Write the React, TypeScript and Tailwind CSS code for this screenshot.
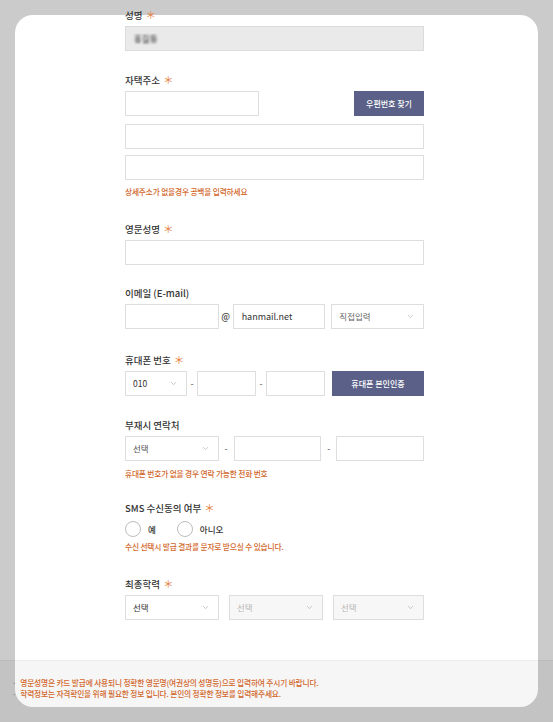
import { ChevronDown } from 'lucide-react';

function Star() {
  return <span className="ml-[3px] text-[10.5px] font-normal leading-[14px] text-[#e5803f]">＊</span>;
}

function Label({ text, req = true }: { text: string; req?: boolean }) {
  return (
    <div className="flex h-[14px] items-center text-[9.5px] font-medium leading-[14px] text-[#333]">
      {text}
      {req && <Star />}
    </div>
  );
}

function Field({ className = '', children }: { className?: string; children?: React.ReactNode }) {
  return (
    <div className={`flex h-[25px] items-center border border-[#dedede] bg-white px-[8px] text-[9px] text-[#333] ${className}`}>
      {children}
    </div>
  );
}

function Select({ text, className = '', muted = false }: { text: string; className?: string; muted?: boolean }) {
  return (
    <div
      className={`flex h-[25px] items-center justify-between border border-[#dedede] pl-[7px] pr-[8px] text-[8.5px] ${
        muted ? 'bg-[#f7f7f7] text-[#b8b8b8]' : 'bg-white text-[#444]'
      } ${className}`}
    >
      <span>{text}</span>
      <ChevronDown size={9} strokeWidth={1.4} className="text-[#9a9a9a]" />
    </div>
  );
}

function Help({ text, className = '' }: { text: string; className?: string }) {
  return <p className={`text-[7.7px] font-medium leading-[11px] tracking-[-0.02em] text-[#d2662a] ${className}`}>{text}</p>;
}

function Dash() {
  return <span className="flex w-[10px] justify-center text-[9px] text-[#555]">-</span>;
}

function Radio({ text }: { text: string }) {
  return (
    <div className="flex items-center gap-[7px]">
      <span className="h-[16px] w-[16px] rounded-full border border-[#bdbdbd] bg-white" />
      <span className="text-[8.5px] font-medium text-[#333]">{text}</span>
    </div>
  );
}

export default function App() {
  return (
    <div className="relative h-[722px] w-[553px] overflow-hidden bg-[#cbcbcb] px-[15px] pt-[15px] font-['Noto_Sans_CJK_KR','Noto_Sans',sans-serif]">
      <div className="flow-root h-[692px] rounded-[18px] bg-white">
        <div className="-mt-[7px] w-[409px] pl-[110px]">
          <Label text="성명" />
          <div className="mt-[4px] flex h-[25px] items-center border border-[#dcdcdc] bg-[#eaeaea] px-[8px]">
            <span className="text-[8.5px] font-bold text-[#666] blur-[1px]">홍길동</span>
          </div>

          <div className="mt-[22px]">
            <Label text="자택주소" />
            <div className="mt-[4px] flex justify-between">
              <Field className="w-[134px]" />
              <button className="h-[25px] w-[70px] bg-[#5a6087] text-[8px] font-medium text-white">우편번호 찾기</button>
            </div>
            <Field className="mt-[8px]" />
            <Field className="mt-[6px]" />
            <Help className="mt-[6px]" text="상세주소가 없을경우 공백을 입력하세요" />
          </div>

          <div className="mt-[25px]">
            <Label text="영문성명" />
            <Field className="mt-[4px]" />
          </div>

          <div className="mt-[21px]">
            <Label text="이메일 (E-mail)" req={false} />
            <div className="mt-[4px] flex items-center">
              <Field className="w-[94px]" />
              <span className="flex w-[14px] justify-center text-[9px] font-medium text-[#444]">@</span>
              <Field className="w-[93px]">hanmail.net</Field>
              <Select className="ml-[6px] w-[93px] !text-[#666]" text="직접입력" />
            </div>
          </div>

          <div className="mt-[24px]">
            <Label text="휴대폰 번호" />
            <div className="mt-[4px] flex items-center">
              <Select className="w-[62px] !text-[#333]" text="010" />
              <Dash />
              <Field className="w-[59px]" />
              <Dash />
              <Field className="w-[59px]" />
              <button className="ml-[7px] h-[25px] flex-1 bg-[#5a6087] text-[8px] font-medium text-white">휴대폰 본인인증</button>
            </div>
          </div>

          <div className="mt-[22px]">
            <Label text="부재시 연락처" req={false} />
            <div className="mt-[4px] flex items-center">
              <Select className="w-[94px] !text-[#555]" text="선택" />
              <span className="flex w-[15px] justify-center text-[9px] text-[#555]">-</span>
              <Field className="w-[88px]" />
              <span className="flex w-[15px] justify-center text-[9px] text-[#555]">-</span>
              <Field className="w-[88px]" />
            </div>
            <Help className="mt-[7px]" text="휴대폰 번호가 없을 경우 연락 가능한 전화 번호" />
          </div>

          <div className="mt-[22px]">
            <Label text="SMS 수신동의 여부" />
            <div className="mt-[4px] flex h-[20px] items-center gap-[21px]">
              <Radio text="예" />
              <Radio text="아니오" />
            </div>
            <Help className="mt-[2px]" text="수신 선택시 발급 결과를 문자로 받으실 수 있습니다." />
          </div>

          <div className="mt-[25px]">
            <Label text="최종학력" />
            <div className="mt-[4px] flex gap-[10px]">
              <Select className="w-[94px] !text-[#333]" text="선택" />
              <Select className="w-[94px]" text="선택" muted />
              <Select className="w-[91px]" text="선택" muted />
            </div>
          </div>
        </div>
      </div>

      <div className="absolute inset-x-0 bottom-0 h-[62px] border-t border-black/[0.04] bg-black/[0.035] pt-[16px]">
        <ul className="pl-[12px] text-[7.7px] font-medium leading-[11px] tracking-[-0.02em] text-[#d2662a]">
          <li className="flex gap-[4px]">
            <span className="text-[#8a8a8a]">·</span>영문성명은 카드 발급에 사용되니 정확한 영문명(여권상의 성명등)으로 입력하여 주시기 바랍니다.
          </li>
          <li className="flex gap-[4px]">
            <span className="text-[#8a8a8a]">·</span>학력정보는 자격확인을 위해 필요한 정보 입니다. 본인의 정확한 정보를 입력해주세요.
          </li>
        </ul>
      </div>
    </div>
  );
}
